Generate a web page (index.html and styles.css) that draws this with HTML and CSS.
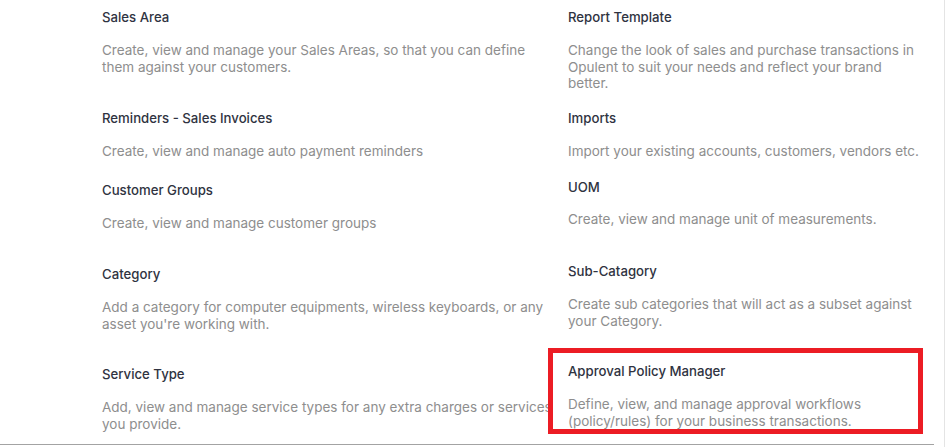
FILE: index.html
```html
<!DOCTYPE html>
<html>
<head>
<meta charset="utf-8">
<link rel="stylesheet" href="styles.css">
</head>
<body>
<div class="page">
  <div class="content">
    <div class="grid">
      <div class="cell">
        <div class="title">Sales Area</div>
        <div class="desc">Create, view and manage your Sales Areas, so that you can define<br>them against your customers.</div>
      </div>
      <div class="cell">
        <div class="title">Report Template</div>
        <div class="desc">Change the look of sales and purchase transactions in<br>Opulent to suit your needs and reflect your brand<br>better.</div>
      </div>
      <div class="cell">
        <div class="title">Reminders - Sales Invoices</div>
        <div class="desc">Create, view and manage auto payment reminders</div>
      </div>
      <div class="cell">
        <div class="title">Imports</div>
        <div class="desc">Import your existing accounts, customers, vendors etc.</div>
      </div>
      <div class="cell">
        <div class="title">Customer Groups</div>
        <div class="desc">Create, view and manage customer groups</div>
      </div>
      <div class="cell up">
        <div class="title">UOM</div>
        <div class="desc tight">Create, view and manage unit of measurements.</div>
      </div>
      <div class="cell">
        <div class="title">Category</div>
        <div class="desc">Add a category for computer equipments, wireless keyboards, or any<br>asset you're working with.</div>
      </div>
      <div class="cell up">
        <div class="title">Sub-Catagory</div>
        <div class="desc">Create sub categories that will act as a subset against<br>your Category.</div>
      </div>
      <div class="cell">
        <div class="title">Service Type</div>
        <div class="desc">Add, view and manage service types for any extra charges or services<br>you provide.</div>
      </div>
      <div class="cell up highlighted">
        <div class="title">Approval Policy Manager</div>
        <div class="desc">Define, view, and manage approval workflows<br>(policy/rules) for your business transactions.</div>
        <div class="highlight"></div>
      </div>
    </div>
  </div>
</div>
</body>
</html>
```

FILE: styles.css
```css
html, body {
  margin: 0;
  padding: 0;
  background: #ffffff;
}

body {
  font-family: Inter, "Open Sans", sans-serif;
  overflow: hidden;
}

.page {
  width: 945px;
  height: 447px;
  border-right: 1px solid #e4e4e4;
  box-sizing: border-box;
}

.content {
  width: 934px;
  height: 445px;
  border-bottom: 1px solid #a3a3a3;
  box-sizing: border-box;
  padding: 9px 0 0 102px;
}

.grid {
  display: grid;
  grid-template-columns: 466px 360px;
  grid-template-rows: 101px 72px 84px 100px auto;
}

.cell {
  position: relative;
}

.cell.up {
  margin-top: -3px;
}

.title {
  font-size: 13.2px;
  line-height: 16px;
  font-weight: 500;
  color: #2f3341;
  white-space: nowrap;
}

.desc {
  margin-top: 17px;
  font-size: 13.5px;
  line-height: 16.5px;
  color: #8e8e8e;
  white-space: nowrap;
}

.desc.tight {
  margin-top: 16px;
}

.highlight {
  position: absolute;
  left: -20px;
  top: -15px;
  width: 375px;
  height: 86px;
  border: 5px solid #ec1c24;
  box-sizing: border-box;
  pointer-events: none;
}
```
